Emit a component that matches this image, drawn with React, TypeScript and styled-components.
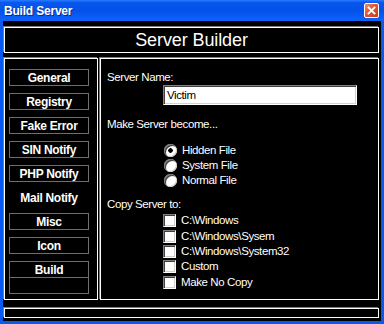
import styled, { createGlobalStyle } from "styled-components";

const GlobalStyle = createGlobalStyle`
  html, body {
    margin: 0;
    padding: 0;
    background: #fff;
  }
`;

const Colors = {
  frame: "#0b5af0",
  white: "#ffffff",
  grey: "#7a7a7a",
  black: "#000000",
};

const Window = styled.div`
  width: 384px;
  height: 324px;
  display: flex;
  flex-direction: column;
  background: ${Colors.frame};
  font-family: "Liberation Sans", Arial, sans-serif;
`;

const TitleBar = styled.div`
  height: 21px;
  flex: none;
  display: flex;
  align-items: center;
  justify-content: space-between;
  padding: 0 5px 0 4px;
  background: linear-gradient(
    #2a7cff 0%,
    #0758ee 12%,
    #0451e8 50%,
    #0a5ef8 85%,
    #1163f5 100%
  );
`;

const TitleText = styled.div`
  color: ${Colors.white};
  font-weight: 700;
  font-size: 12px;
  letter-spacing: -0.2px;
  text-shadow: 1px 1px 0 #0a2a8a;
`;

const CloseButton = styled.div`
  width: 13px;
  height: 13px;
  border: 1px solid ${Colors.white};
  border-radius: 2px;
  background: linear-gradient(135deg, #f08a6a 0%, #e2552f 45%, #c73b18 100%);
  display: flex;
  align-items: center;
  justify-content: center;
`;

const Client = styled.div`
  flex: 1;
  margin: 0 3px 3px 3px;
  background: ${Colors.black};
  display: flex;
  flex-direction: column;
  padding: 6px 2px 3px 1px;
`;

const Header = styled.div`
  height: 26px;
  box-sizing: border-box;
  border: 1px solid ${Colors.white};
  box-shadow: -1px -1px 0 ${Colors.grey};
  display: flex;
  align-items: center;
  justify-content: center;
  color: ${Colors.white};
  font-size: 18px;
  letter-spacing: -0.1px;
`;

const Body = styled.div`
  margin-top: 5px;
  height: 242px;
  display: flex;
  gap: 2px;
`;

const Panel = styled.div<{ width: number }>`
  width: ${({ width }) => width}px;
  box-sizing: border-box;
  border: 1px solid ${Colors.white};
  box-shadow: -1px -1px 0 ${Colors.grey};
`;

const Nav = styled(Panel)`
  display: flex;
  flex-direction: column;
  gap: 7px;
  padding: 10px 0 0 4px;
`;

const NavButton = styled.div<{ active?: boolean; empty?: boolean }>`
  width: 80px;
  height: 17px;
  box-sizing: border-box;
  border: 1px solid ${({ active }) => (active ? "transparent" : "#6e6e6e")};
  display: flex;
  align-items: center;
  justify-content: center;
  color: ${Colors.white};
  font-weight: 700;
  font-size: 12px;
  letter-spacing: -0.3px;
  margin-top: ${({ empty }) => (empty ? "-8px" : "0")};
`;

const Form = styled(Panel)`
  display: flex;
  flex-direction: column;
  padding: 12px 0 0 6px;
  color: ${Colors.white};
  font-size: 11.5px;
  letter-spacing: -0.4px;
`;

const Label = styled.div<{ gap?: number }>`
  line-height: 13px;
  margin-top: ${({ gap }) => gap || 0}px;
`;

const TextBox = styled.div`
  margin: 1px 0 0 56px;
  width: 194px;
  height: 20px;
  box-sizing: border-box;
  background: ${Colors.white};
  border-top: 1px solid #808080;
  border-left: 1px solid #808080;
  border-bottom: 1px solid #ffffff;
  border-right: 1px solid #ffffff;
  box-shadow: inset 1px 1px 0 #404040, inset -1px -1px 0 #d4d0c8;
  color: ${Colors.black};
  display: flex;
  align-items: center;
  padding-left: 3px;
`;

const OptionList = styled.div<{ gap: number; indent: number; row: number }>`
  margin: ${({ gap }) => gap}px 0 0 ${({ indent }) => indent}px;
  display: flex;
  flex-direction: column;

  & > div {
    height: ${({ row }) => row}px;
  }
`;

const Option = styled.div`
  display: flex;
  align-items: center;
  gap: 5px;
  line-height: 13px;
`;

const Radio = styled.span<{ checked?: boolean }>`
  width: 13px;
  height: 13px;
  box-sizing: border-box;
  border-radius: 50%;
  background: ${({ checked }) =>
    checked
      ? "radial-gradient(circle, #000 0 2px, #fff 2.5px)"
      : "#fff"};
  box-shadow: inset 1px 1px 0 #808080, inset 2px 2px 0 #404040,
    inset -1px -1px 0 #d4d0c8;
  flex: none;
`;

const Check = styled.span`
  width: 13px;
  height: 13px;
  box-sizing: border-box;
  background: ${Colors.white};
  border-top: 1px solid #808080;
  border-left: 1px solid #808080;
  border-bottom: 1px solid #ffffff;
  border-right: 1px solid #ffffff;
  box-shadow: inset 1px 1px 0 #404040, inset -1px -1px 0 #d4d0c8;
  flex: none;
`;

const Footer = styled.div`
  margin-top: 8px;
  height: 10px;
  box-sizing: border-box;
  border: 1px solid ${Colors.white};
  box-shadow: -1px -1px 0 ${Colors.grey};
`;

const navItems = [
  "General",
  "Registry",
  "Fake Error",
  "SIN Notify",
  "PHP Notify",
  "Mail Notify",
  "Misc",
  "Icon",
  "Build",
];

const radios = [
  { label: "Hidden File", checked: true },
  { label: "System File" },
  { label: "Normal File" },
];

const copyTargets = [
  "C:\\Windows",
  "C:\\Windows\\Sysem",
  "C:\\Windows\\System32",
  "Custom",
  "Make No Copy",
];

export default function App() {
  return (
    <>
      <GlobalStyle />
      <Window>
        <TitleBar>
          <TitleText>Build Server</TitleText>
          <CloseButton>
            <svg width="9" height="9" viewBox="0 0 9 9">
              <path
                d="M1.5 1.5 L7.5 7.5 M7.5 1.5 L1.5 7.5"
                stroke="#fff"
                strokeWidth="1.8"
                strokeLinecap="square"
              />
            </svg>
          </CloseButton>
        </TitleBar>
        <Client>
          <Header>Server Builder</Header>
          <Body>
            <Nav width={94}>
              {navItems.map((item) => (
                <NavButton key={item} active={item === "Mail Notify"}>
                  {item}
                </NavButton>
              ))}
              <NavButton empty />
            </Nav>
            <Form width={279}>
              <Label>Server Name:</Label>
              <TextBox>Victim</TextBox>
              <Label gap={13}>Make Server become...</Label>
              <OptionList gap={12} indent={57} row={15}>
                {radios.map((r) => (
                  <Option key={r.label} role="radio" aria-checked={!!r.checked}>
                    <Radio checked={r.checked} />
                    {r.label}
                  </Option>
                ))}
              </OptionList>
              <Label gap={10}>Copy Server to:</Label>
              <OptionList gap={2} indent={56} row={15.4}>
                {copyTargets.map((t) => (
                  <Option key={t} role="checkbox" aria-checked={false}>
                    <Check />
                    {t}
                  </Option>
                ))}
              </OptionList>
            </Form>
          </Body>
          <Footer />
        </Client>
      </Window>
    </>
  );
}
